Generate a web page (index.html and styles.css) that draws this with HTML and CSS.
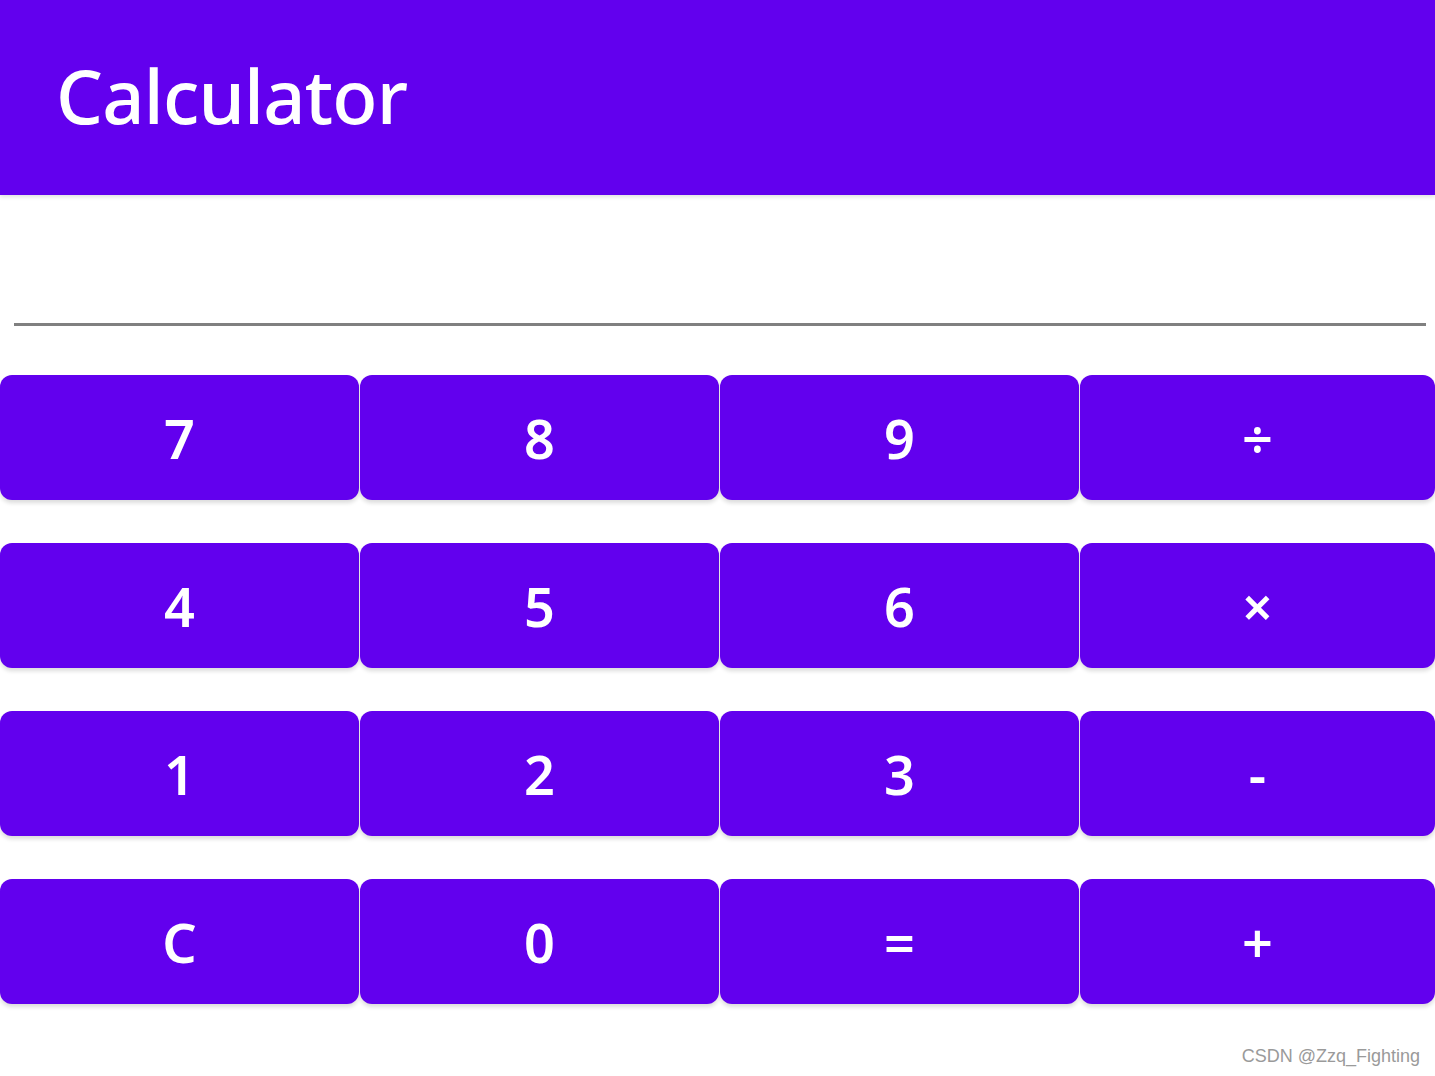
FILE: index.html
```html
<!DOCTYPE html>
<html lang="en">
<head>
    <meta charset="UTF-8">
    <meta name="viewport" content="width=device-width, initial-scale=1.0">
    <title>Calculator</title>
    <link rel="stylesheet" href="styles.css">
</head>
<body>
    <header class="app-bar">
        <h1>Calculator</h1>
    </header>
    <div class="display">
        <div class="display-input" id="display"></div>
    </div>
    <div class="keypad">
        <button class="key">7</button>
        <button class="key">8</button>
        <button class="key">9</button>
        <button class="key">÷</button>
        <button class="key">4</button>
        <button class="key">5</button>
        <button class="key">6</button>
        <button class="key">×</button>
        <button class="key">1</button>
        <button class="key">2</button>
        <button class="key">3</button>
        <button class="key">-</button>
        <button class="key">C</button>
        <button class="key">0</button>
        <button class="key">=</button>
        <button class="key">+</button>
    </div>
    <div class="watermark">CSDN @Zzq_Fighting</div>
</body>
</html>
```

FILE: styles.css
```css
body {
    margin: 0;
    padding: 0;
    background: #fff;
    font-family: "Noto Sans", "Open Sans", sans-serif;
    width: 1435px;
    height: 1076px;
    overflow: hidden;
}
.app-bar {
    background-color: #6200ee;
    color: #fff;
    height: 195px;
    box-shadow: 0 2px 4px rgba(0, 0, 0, 0.12);
    display: flex;
    align-items: center;
    padding-left: 56px;
    position: relative;
}
.app-bar h1 {
    margin: 0;
    font-size: 74px;
    font-weight: 500;
    letter-spacing: -0.8px;
    margin-top: -4px;
}
.display {
    padding: 0 9px 0 14px;
}
.display-input {
    height: 128px;
    border-bottom: 3px solid #808080;
}
.keypad {
    margin-top: 49px;
    display: grid;
    grid-template-columns: repeat(3, 359px) 1fr;
    column-gap: 1px;
    row-gap: 43px;
}
.key {
    height: 125px;
    border: none;
    border-radius: 12px;
    background-color: #6200ee;
    color: #fff;
    font-family: "Noto Sans", "Open Sans", sans-serif;
    font-size: 54px;
    font-weight: 600;
    padding: 0;
    box-shadow: 0 3px 4px rgba(0, 0, 0, 0.14);
    cursor: pointer;
}
.watermark {
    text-align: right;
    padding-right: 15px;
    margin-top: 42px;
    font-family: "Liberation Sans", Arial, sans-serif;
    font-size: 18px;
    color: #9a9a9a;
}
```
